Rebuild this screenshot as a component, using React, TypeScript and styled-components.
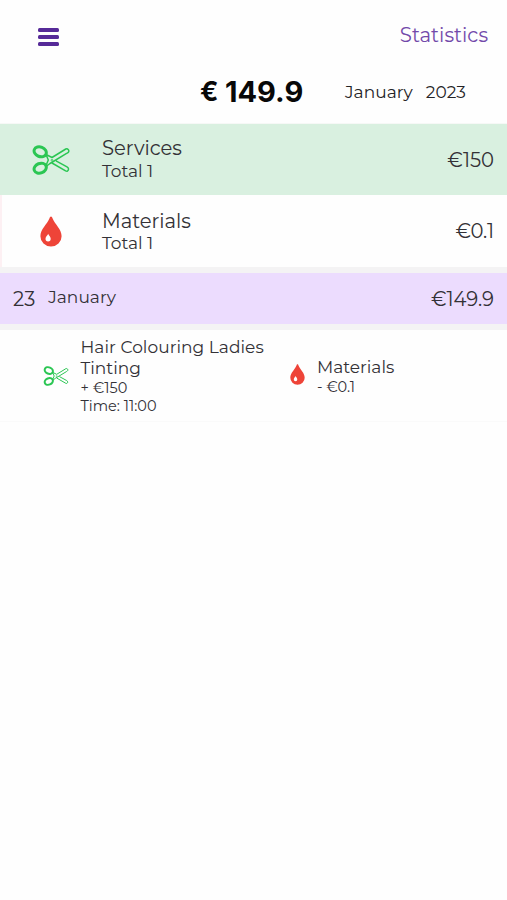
import React from "react";
import styled, { createGlobalStyle } from "styled-components";

const GlobalStyle = createGlobalStyle`
  * { box-sizing: border-box; }
  body { margin: 0; background: #fefefe; }
`;

const Page = styled.main`
  min-height: 900px;
  font-family: Montserrat, Inter, sans-serif;
  color: #333136;
  overflow: hidden;
`;

const Label = styled.span<{ $size: number; $line: number; $track?: number; $color?: string }>`
  display: block;
  white-space: nowrap;
  font-size: ${(p) => p.$size}px;
  line-height: ${(p) => p.$line}px;
  letter-spacing: ${(p) => p.$track ?? 0}px;
  color: ${(p) => p.$color ?? "inherit"};
`;

const Header = styled.header`
  display: flex;
  justify-content: space-between;
  height: 70px;
  padding: 23px 19px 0 37.5px;
`;

const MenuButton = styled.button`
  display: flex;
  flex-direction: column;
  gap: 3px;
  width: 21.500px;
  height: 24px;
  padding: 5px 0 0;
  border: 0;
  background: none;
`;

const MenuBar = styled.span`
  width: 21.500px;
  height: 4px;
  border-radius: 1.5px;
  background: #562a98;
`;

const Summary = styled.section`
  display: flex;
  height: 54px;
  padding: 8px 0 0 200px;
  border-bottom: 1px solid #f6f8f6;
`;

const Balance = styled.strong`
  display: flex;
  width: 145px;
  font: 700 29px/28px Inter, sans-serif;
  color: #080808;
`;

const Currency = styled.span`
  width: 25px;
  font-size: 27px;
`;

const Period = styled.div`
  display: flex;
  gap: 13px;
  color: #242326;
`;

const CategoryRow = styled.section<{ $tint?: boolean }>`
  display: grid;
  grid-template-columns: 102px 1fr auto;
  align-items: center;
  height: ${(p) => (p.$tint ? 71 : 72)}px;
  padding-right: 13px;
  background: ${(p) => (p.$tint ? "#d9f0e0" : "#fefefe")};
  box-shadow: ${(p) => (p.$tint ? "none" : "inset 2px 0 #fdf0f3")};
`;

const IconCell = styled.div`
  display: flex;
  justify-content: center;
`;

const DayRow = styled.section`
  display: flex;
  align-items: center;
  height: 63px;
  padding: 0 13px;
  border: solid #f4f3f4;
  border-width: 6px 0;
  background: #ecdcfe;
`;

const Month = styled.div`
  flex: 1;
  padding: 0 0 3px 13px;
`;

const Details = styled.section`
  display: grid;
  grid-template-columns: 80.5px 202.5px 34px 1fr;
  height: 92px;
  padding-top: 7px;
  border-bottom: 1px solid #fafafa;
`;

const DetailIcon = styled.div<{ $left: number; $top: number }>`
  padding: ${(p) => p.$top}px 0 0 ${(p) => p.$left}px;
`;

const Entry = styled.div<{ $top?: number }>`
  padding-top: ${(p) => p.$top ?? 0}px;
`;

const Drawing = styled.svg`
  display: block;
  flex: none;
`;

function Scissors({ width, height }: { width: number; height: number }) {
  return (
    <Drawing width={width} height={height} viewBox="0 0 38 30" fill="none" stroke="#2bc653" strokeLinejoin="round">
      <ellipse cx="8.2" cy="6.8" rx="6.3" ry="4.8" transform="rotate(22 8.2 6.8)" strokeWidth="3" />
      <ellipse cx="8.2" cy="23.2" rx="6.3" ry="4.8" transform="rotate(-22 8.2 23.2)" strokeWidth="3" />
      <path d="M14 9.5 20 12.5 33.8 4c1.800-1 3.600 1.300 2.800 2.800-.3.600-1 1-1.600 1.400L18 18.500l-4 3M14 20.500l2.300-5.500L14 9.500M24 15.800l11 6c2.200 1.200 1.800 3.500.4 4.300-.6.3-1.200.1-1.800-.2L20 18" strokeWidth="1.5" />
      <circle cx="20" cy="15.2" r="0.9" strokeWidth="0.8" />
    </Drawing>
  );
}

function Drop({ width, height }: { width: number; height: number }) {
  return (
    <Drawing width={width} height={height} viewBox="0 0 22 31">
      <path d="M11 .4c.8 0 1.1.8 1.500 1.800C15 8.400 21.600 13.200 21.600 20.200a10.600 10.400 0 0 1-21.200 0C.4 13.200 7 8.400 9.500 2.200 9.900 1.200 10.200.4 11 .4Z" fill="#ee4438" />
      <path d="M8.200 17.800c.4 1.700 2.500 2.900 2.500 5a2.600 2.600 0 0 1-5.200 0c0-2.100 2.200-3.300 2.700-5Z" fill="#fff" />
    </Drawing>
  );
}

export default function App() {
  return (
    <Page>
      <GlobalStyle />
      <Header>
        <MenuButton aria-label="Menu">
          <MenuBar />
          <MenuBar />
          <MenuBar />
        </MenuButton>
        <Label $size={19.7} $line={24} $color="#7249aa">Statistics</Label>
      </Header>
      <Summary>
        <Balance><Currency>€</Currency>149.9</Balance>
        <Period>
          <Label $size={17} $line={28} $track={0.05}>January</Label>
          <Label $size={17} $line={28}>2023</Label>
        </Period>
      </Summary>
      <CategoryRow $tint>
        <IconCell><Scissors width={38} height={30} /></IconCell>
        <div>
          <Label $size={19.6} $line={23} $track={-0.04}>Services</Label>
          <Label $size={17} $line={22}>Total 1</Label>
        </div>
        <Label $size={19.6} $line={24} $track={-0.05}>€150</Label>
      </CategoryRow>
      <CategoryRow>
        <IconCell><Drop width={22} height={31} /></IconCell>
        <div>
          <Label $size={19.6} $line={24} $track={-0.04}>Materials</Label>
          <Label $size={17} $line={21}>Total 1</Label>
        </div>
        <Label $size={19.6} $line={24} $track={-0.05}>€0.1</Label>
      </CategoryRow>
      <DayRow>
        <Label $size={19.6} $line={24}>23</Label>
        <Month><Label $size={17} $line={21} $track={0.05}>January</Label></Month>
        <Label $size={19.6} $line={24} $track={-0.05}>€149.9</Label>
      </DayRow>
      <Details>
        <DetailIcon $left={43} $top={29}><Scissors width={26} height={20} /></DetailIcon>
        <Entry>
          <Label $size={17} $line={21} $track={0.05}>Hair Colouring Ladies</Label>
          <Label $size={17} $line={21}>Tinting</Label>
          <Label $size={14.5} $line={18}>+ €150</Label>
          <Label $size={14.5} $line={18}>Time: 11:00</Label>
        </Entry>
        <DetailIcon $left={7} $top={27}><Drop width={15} height={21} /></DetailIcon>
        <Entry $top={20}>
          <Label $size={17} $line={21}>Materials</Label>
          <Label $size={14.5} $line={18}>- €0.1</Label>
        </Entry>
      </Details>
    </Page>
  );
}
